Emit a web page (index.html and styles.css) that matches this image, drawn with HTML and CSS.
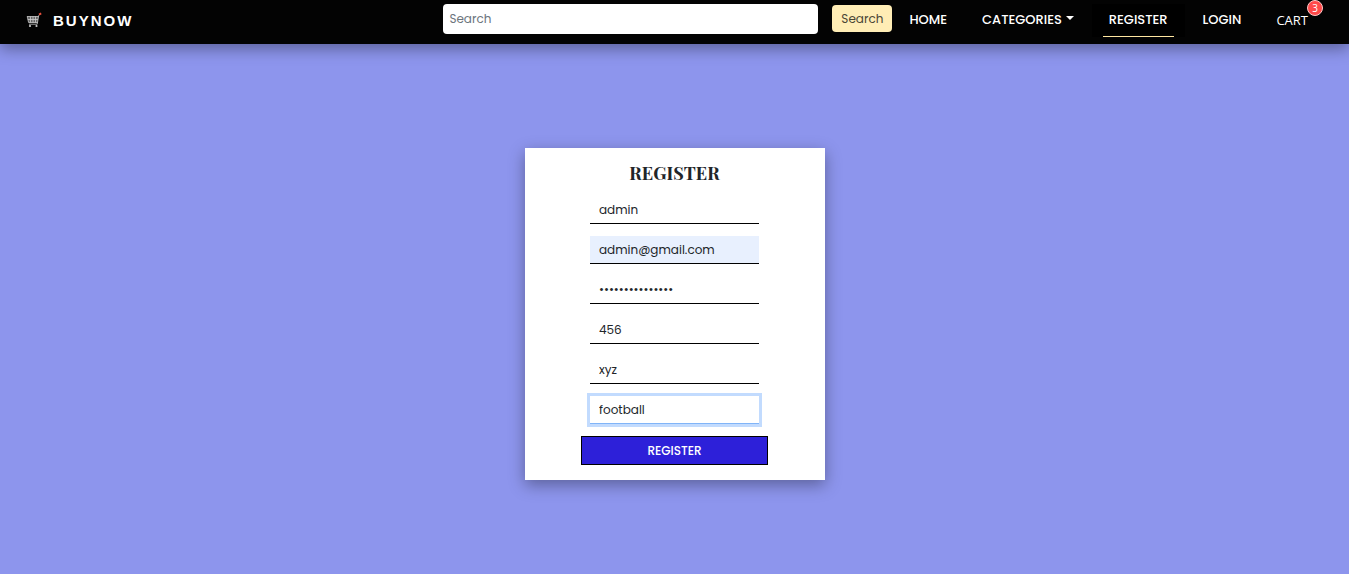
FILE: index.html
```html
<!DOCTYPE html>
<html lang="en">
<head>
<meta charset="utf-8">
<meta name="viewport" content="width=device-width, initial-scale=1">
<title>BuyNow - Register</title>
<link rel="stylesheet" href="styles.css">
</head>
<body>
<header class="navbar">
  <a class="brand" href="#">
    <svg class="brand-icon" viewBox="0 0 16 16" aria-hidden="true">
      <path d="M1.5 4.5h11l-1 6H2.6z" fill="#666"/>
      <path d="M1 4.5h11.5M1.8 7.5h10.2M2.6 10.5h9M4.5 4.5v6M7 4.5v6M9.5 4.5v6M1.2 4.5l1.4 6M14 2l-1.3 1.6L11.2 12.2H3" fill="none" stroke="#ccc" stroke-width=".8"/>
      <circle cx="4" cy="14" r="1.1" fill="#ccc"/>
      <circle cx="10.5" cy="14" r="1.1" fill="#ccc"/>
      <path d="M13 2.6L15.2 1.4" stroke="#e8503e" stroke-width="1.8"/>
    </svg>
    <span>BUYNOW</span>
  </a>
  <form class="search">
    <input class="search-input" type="search" placeholder="Search" aria-label="Search">
    <button class="search-button" type="button">Search</button>
  </form>
  <nav class="menu">
    <a class="menu-link" href="#">HOME</a>
    <a class="menu-link" href="#">CATEGORIES<span class="caret"></span></a>
    <a class="menu-link menu-active" href="#">REGISTER</a>
    <a class="menu-link" href="#">LOGIN</a>
    <a class="menu-link menu-cart" href="#">CART<span class="badge">3</span></a>
  </nav>
</header>
<main class="page">
  <form class="card">
    <h1 class="card-title">REGISTER</h1>
    <input class="field" type="text" value="admin" aria-label="Name">
    <input class="field field-filled" type="email" value="admin@gmail.com" aria-label="Email">
    <input class="field" type="password" value="passwordpasswor" aria-label="Password">
    <input class="field" type="text" value="456" aria-label="Phone">
    <input class="field" type="text" value="xyz" aria-label="Address">
    <input class="field field-focus" type="text" value="football" aria-label="Favourite sport">
    <button class="submit" type="button">REGISTER</button>
  </form>
</main>
</body>
</html>
```
FILE: styles.css
```css
* { box-sizing: border-box; }

body {
  margin: 0;
  min-height: 100vh;
  background: #8d95ed;
  color: #212529;
  font-family: Poppins, Inter, sans-serif;
  font-size: 12px;
}

a { color: inherit; text-decoration: none; }

input, button { font: inherit; margin: 0; }

.navbar {
  position: relative;
  display: flex;
  align-items: flex-start;
  height: 44px;
  padding: 4px 24px 0 26px;
  background: #030303;
  color: #fff;
  box-shadow: 0 5px 15px rgba(0, 0, 0, .35);
}

.brand {
  display: flex;
  align-items: center;
  gap: 11px;
  height: 32px;
  margin-right: auto;
  font: bold 15px "Liberation Sans", Arial, sans-serif;
  letter-spacing: 2px;
}

.brand-icon { width: 16px; height: 16px; }

.search {
  display: flex;
  align-items: flex-start;
  gap: 14px;
}

.search-input {
  width: 375px;
  height: 30px;
  padding: 0 6px;
  border: 0;
  border-radius: 4px;
  background: #fff;
  appearance: none;
}

.search-input::placeholder { color: #6c757d; opacity: 1; }

.search-button {
  width: 60px;
  height: 27px;
  margin-top: 1px;
  padding: 0;
  border: 0;
  border-radius: 4px;
  background: #ffedb5;
  color: #4b4636;
}

.menu {
  display: flex;
  gap: 1px;
  font-size: 13px;
  font-weight: 500;
}

.menu-link {
  position: relative;
  display: flex;
  align-items: center;
  justify-content: center;
  height: 33px;
  padding: 0 17px 2px;
}

.menu-active { background: #000; }

.menu-active::after {
  content: "";
  position: absolute;
  right: 11px;
  bottom: 0;
  left: 11px;
  height: 1px;
  background: #ffe6a0;
}

.caret {
  margin: 0 0 3px 4px;
  border: 4px solid transparent;
  border-top-color: #fff;
  border-bottom: 0;
}

.menu-cart { font-family: "Open Sans", sans-serif; font-weight: 400; }

.badge {
  position: absolute;
  top: -4px;
  right: 2px;
  display: flex;
  align-items: center;
  justify-content: center;
  width: 16px;
  height: 16px;
  border: 1px solid #ffc9c9;
  border-radius: 50%;
  background: #ff4949;
  font-size: 10px;
}

.page { padding: 104px 16px 94px; }

.card {
  display: flex;
  flex-direction: column;
  align-items: center;
  gap: 12px;
  width: 300px;
  max-width: 100%;
  margin: 0 auto;
  padding: 15px;
  background: #fff;
  box-shadow: 0 5px 15px rgba(0, 0, 0, .35);
}

.card-title {
  margin: 0;
  font: bold 18px/21px "Playfair Display", "Liberation Serif", serif;
}

.field {
  width: 169px;
  height: 28px;
  padding: 0 9px;
  border: 0;
  border-bottom: 1px solid #000;
  border-radius: 0;
  outline: 0;
  background: #fff;
  color: #212529;
}

.field-filled { background: #e8f0fe; }

.field-focus {
  border-color: #80b4f8;
  box-shadow: 0 0 0 3px #c2dbfe;
}

.submit {
  width: 187px;
  height: 29px;
  padding: 0;
  border: 1px solid #000;
  background: #2d20d9;
  color: #fff;
  font-weight: 500;
}
```
